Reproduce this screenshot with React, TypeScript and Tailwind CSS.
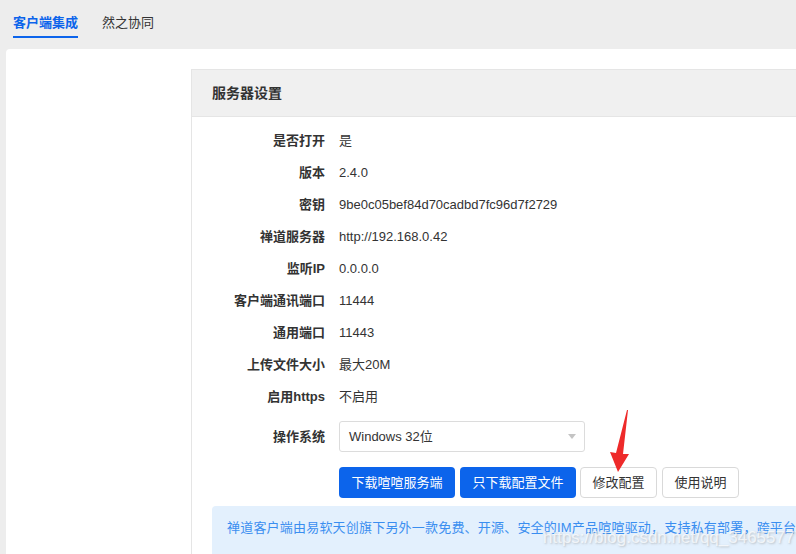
import React from "react";

interface Row {
  label: string;
  value: string;
}

const rows: Row[] = [
  { label: "是否打开", value: "是" },
  { label: "版本", value: "2.4.0" },
  { label: "密钥", value: "9be0c05bef84d70cadbd7fc96d7f2729" },
  { label: "禅道服务器", value: "http://192.168.0.42" },
  { label: "监听IP", value: "0.0.0.0" },
  { label: "客户端通讯端口", value: "11444" },
  { label: "通用端口", value: "11443" },
  { label: "上传文件大小", value: "最大20M" },
  { label: "启用https", value: "不启用" },
];

const font = {
  fontFamily: '"Liberation Sans", "Noto Sans CJK SC", sans-serif',
};

const App: React.FC = () => {
  return (
    <div
      className="relative w-full h-[554px] overflow-hidden bg-[#ededed] text-[13px] text-[#333]"
      style={font}
    >
      {/* tabs */}
      <div className="h-[49px] flex px-[13px] gap-[24px]">
        <div className="pt-[14px] pb-[6px] leading-[18px] border-b-2 border-[#0c64eb] text-[#0c64eb] font-bold h-[38px]">
          客户端集成
        </div>
        <div className="pt-[14px] pb-[6px] leading-[18px] h-[38px]">然之协同</div>
      </div>

      {/* card */}
      <div className="ml-[6px] h-[505px] bg-white rounded-tl-[4px] flex overflow-hidden">
        <div className="w-[185px] shrink-0" />
        <div className="flex-1 mt-[20px] border-l border-t border-[#e5e5e5] flex flex-col min-w-0">
          <div className="shrink-0 h-[47px] bg-[#f0f0f0] border-b border-[#e5e5e5] pl-[20px] flex items-center font-bold text-[14px] text-[#333]">
            服务器设置
          </div>
          <div className="shrink-0 pt-[8px] pl-[20px]">
            {rows.map((row) => (
              <div key={row.label} className="h-[32px] flex items-center">
                <div className="w-[113px] text-right font-bold leading-[18px]">
                  {row.label}
                </div>
                <div className="ml-[14px] leading-[18px]">{row.value}</div>
              </div>
            ))}
            <div className="mt-[8px] h-[31px] flex items-center">
              <div className="w-[113px] text-right font-bold leading-[18px]">
                操作系统
              </div>
              <div className="ml-[14px] w-[246px] h-[31px] border border-[#dcdcdc] rounded-[3px] flex items-center justify-between pl-[9px] pr-[8px]">
                <span className="leading-[18px]">Windows 32位</span>
                <span className="w-0 h-0 border-l-[4px] border-r-[4px] border-t-[5px] border-l-transparent border-r-transparent border-t-[#c4c4c4]" />
              </div>
            </div>
            <div className="mt-[15px] h-[31px] flex pl-[127px]">
              <button className="w-[116px] h-[31px] rounded-[4px] bg-[#0c64eb] text-white leading-[18px]">
                下载喧喧服务端
              </button>
              <button className="ml-[5px] w-[116px] h-[31px] rounded-[4px] bg-[#0c64eb] text-white leading-[18px]">
                只下载配置文件
              </button>
              <button className="ml-[4px] w-[77px] h-[31px] rounded-[4px] bg-white border border-[#d9d9d9] text-[#333] leading-[18px]">
                修改配置
              </button>
              <button className="ml-[5px] w-[77px] h-[31px] rounded-[4px] bg-white border border-[#d9d9d9] text-[#333] leading-[18px]">
                使用说明
              </button>
            </div>
            <div className="mt-[8px] h-[60px] bg-[#e3f0fd] rounded-l-[4px] pl-[15px] pt-[13px] whitespace-nowrap overflow-hidden text-[#3a8ef0] leading-[18px] tracking-[0.2px]">
              禅道客户端由易软天创旗下另外一款免费、开源、安全的IM产品喧喧驱动，支持私有部署，跨平台操作系统。
            </div>
          </div>
        </div>
      </div>

      {/* watermark */}
      <div
        className="absolute left-[543px] top-[527px] text-[17px] leading-[22px] whitespace-nowrap text-white/70"
        style={{ textShadow: "1px 1px 2px rgba(150,150,150,0.5)", fontFamily: '"Liberation Sans", sans-serif' }}
      >
        https://blog.csdn.net/qq_34655777
      </div>

      {/* red arrow */}
      <svg
        className="absolute left-[606px] top-[408px]"
        width="30"
        height="68"
        viewBox="0 0 30 68"
      >
        <polygon
          points="21,2 22,2 17,46 23,46 12,64 4,44 10,45"
          fill="#ee2a2a"
        />
      </svg>
    </div>
  );
};

export default App;
